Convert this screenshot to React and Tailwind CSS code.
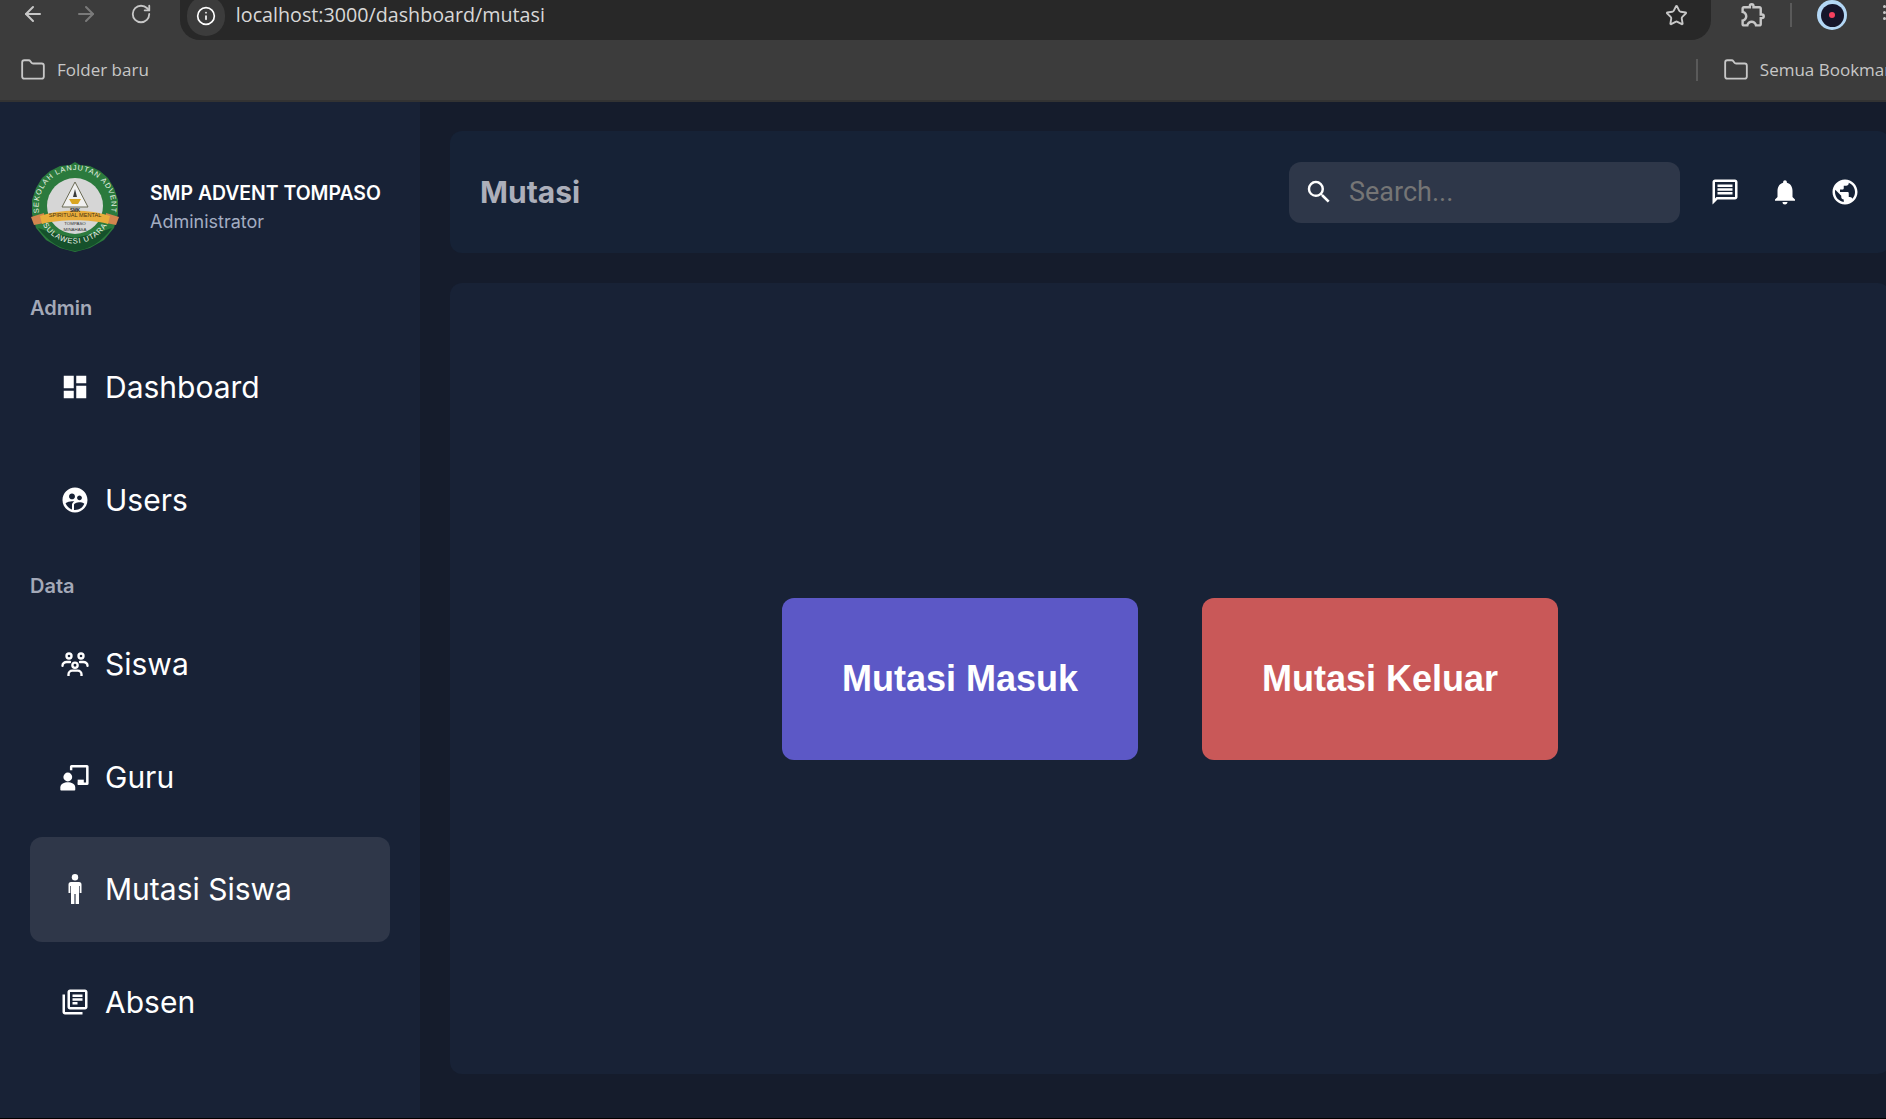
import React from "react";
import { ArrowLeft, ArrowRight, RotateCw, Info, Star, Folder } from "lucide-react";
import {
  MdDashboard, MdSupervisedUserCircle, MdOutlineExtension,
  MdOutlineLibraryBooks, MdSearch, MdOutlineMessage, MdNotifications, MdPublic,
} from "react-icons/md";

function SiswaIcon({ size }) {
  return (
    <svg width={size} height={size} viewBox="0 0 24 24" fill="none" stroke="currentColor" strokeWidth="1.9" strokeLinecap="round">
      <circle cx="7.2" cy="5.6" r="2" />
      <circle cx="16.8" cy="5.6" r="2" />
      <circle cx="12" cy="13" r="2.1" />
      <path d="M6.8 21.5v-1.2a3 3 0 0 1 3-3h4.4a3 3 0 0 1 3 3v1.2" strokeLinecap="butt" />
      <path d="M2 13.4c0-1.8 1.6-3 3.4-3H8" />
      <path d="M22 13.4c0-1.8-1.6-3-3.4-3H16" />
    </svg>
  );
}

function GuruIcon() {
  return (
    <svg width="32" height="32" viewBox="0 0 24 24" fill="currentColor" className="shrink-0">
      <path d="M8.2 7V4.2A1.2 1.2 0 0 1 9.4 3H21a1.2 1.2 0 0 1 1.2 1.2v12.6A1.2 1.2 0 0 1 21 18h-7v-1.9h6.3V4.9H10v2.1z" />
      <rect x="14" y="14" width="4.6" height="3" />
      <circle cx="6.6" cy="12" r="3.3" />
      <path d="M1 21.5v-1.7C1 17.300 4 16 6.600 16s5.600 1.300 5.600 3.800v1.700a.6.6 0 0 1-.6.6H1.600a.6.6 0 0 1-.6-.6z" />
    </svg>
  );
}

function ManIcon() {
  return (
    <svg width="14" height="30" viewBox="0 0 14 30" fill="currentColor" className="shrink-0">
      <circle cx="7" cy="3.300" r="3.200" />
      <path d="M3 8h8a2.500 2.500 0 0 1 2.500 2.500V19h-1.800v-7h-.7v18H7.600V20H6.400v10H3V12h-.7v7H.5v-8.500A2.500 2.500 0 0 1 3 8z" />
    </svg>
  );
}

function Logo() {
  return (
    <svg width="90" height="90" viewBox="0 0 90 90" className="shrink-0">
      <defs>
        <path id="arcTop" d="M9.500 53 A36.500 36.500 0 1 1 80.500 53" fill="none" />
        <path id="arcBottom" d="M13 63 A37 37 0 0 0 77 63" fill="none" />
      </defs>
      <path d="M45 0 L50 3 L60 4 L70 9 L78 16 L84 26 L88 38 L88 52 L84 66 L74 78 L60 86 L45 90 L30 86 L16 78 L6 66 L2 52 L2 38 L6 26 L12 16 L20 9 L30 4 L40 3 Z" fill="#2b7a3d" />
      <path d="M8 66 C18 80 32 88 45 89 C58 88 72 80 82 66 L70 70 L45 76 L20 70 Z" fill="#15512b" />
      <circle cx="45" cy="44" r="28" fill="#d6d6d6" />
      <path d="M45 20 L58 45 L32 45 Z" fill="#f0f0f0" stroke="#6b6b55" strokeWidth="1" />
      <path d="M39 37 H51 L48 42 H42 Z" fill="#d9a521" />
      <path d="M45 27 L47 35 H43 Z" fill="#3a3a3a" />
      <path d="M1 55 L14 51 L14 61 L4 63 Z" fill="#d2854e" />
      <path d="M89 55 L76 51 L76 61 L86 63 Z" fill="#d2854e" />
      <path d="M10 54 C30 47 60 47 80 54 L78 62 C60 57 30 57 12 62 Z" fill="#e9ad3b" />
      <text fontFamily="Liberation Sans, sans-serif" fontSize="7.400" fill="#e9f3e6" letterSpacing="0.900">
        <textPath href="#arcTop" startOffset="50%" textAnchor="middle">SEKOLAH LANJUTAN ADVENT</textPath>
      </text>
      <text fontFamily="Liberation Sans, sans-serif" fontSize="7.600" fill="#eef5ea" letterSpacing="0.800">
        <textPath href="#arcBottom" startOffset="50%" textAnchor="middle">SULAWESI UTARA</textPath>
      </text>
      <text x="45" y="55" textAnchor="middle" fontFamily="Liberation Sans, sans-serif" fontSize="5.600" fill="#4a3410">SPIRITUAL MENTAL</text>
      <text x="45" y="63" textAnchor="middle" fontFamily="Liberation Sans, sans-serif" fontSize="4.400" fill="#333">TOMPASO</text>
      <text x="45" y="69" textAnchor="middle" fontFamily="Liberation Sans, sans-serif" fontSize="4.400" fill="#333">MINAHASA</text>
      <text x="45" y="50" textAnchor="middle" fontFamily="Liberation Sans, sans-serif" fontSize="4.600" fontWeight="700" fill="#222">SMK</text>
    </svg>
  );
}

function NavItem({ icon: Icon, label, active, size = 30 }) {
  return (
    <div className={`flex h-[104.5px] items-center gap-[15px] rounded-xl pl-[30px] mb-2 ${active ? "bg-[#2f3749]" : ""}`}>
      <span className="flex w-[30px] justify-center text-white">
        <Icon size={size} />
      </span>
      <span className="text-[30px] leading-none text-white">{label}</span>
    </div>
  );
}

function SectionLabel({ children, className }) {
  return (
    <div className={`flex items-center text-[20px] font-semibold text-[#a3a9b8] ${className}`}>{children}</div>
  );
}

export default function App() {
  return (
    <div className="flex h-[1119px] w-[1886px] flex-col overflow-hidden bg-[#151c2c] font-['Inter',sans-serif]">
      {/* browser chrome */}
      <div className="h-[102px] shrink-0 border-b-2 border-[#333333] bg-[#3c3c3c] font-['Open_Sans',sans-serif] text-[#c7c7c7]">
        <div className="flex h-[40px] items-start">
          <div className="flex w-[180px] items-center pt-[2px] pl-[21px]">
            <ArrowLeft size={24} strokeWidth={2} className="text-[#c7c7c7]" />
            <ArrowRight size={24} strokeWidth={2} className="ml-[29px] text-[#7a7a7a]" />
            <RotateCw size={22} strokeWidth={2} className="ml-[32px] text-[#c7c7c7]" />
          </div>
          <div className="flex h-[40px] w-[1533px] items-center rounded-b-[20px] bg-[#282828] pl-[7px]">
            <span className="-mt-[8px] flex h-[40px] w-[38px] items-center justify-center rounded-full bg-[#3c3c3c]">
              <Info size={20} className="text-white" />
            </span>
            <span className="-mt-[11px] ml-[11px] text-[19.7px] leading-none text-[#d8d8d8]">localhost:3000/dashboard/mutasi</span>
            <Star size={23} strokeWidth={2} className="-mt-[10px] ml-auto mr-[23px] text-[#c7c7c7]" />
          </div>
          <MdOutlineExtension size={29} className="mt-0 ml-[28px] text-[#c7c7c7]" />
          <div className="mt-[3px] ml-[22px] h-[24px] w-[2px] bg-[#5a5a5a]" />
          <div className="mt-0 ml-[25px] flex h-[30px] w-[30px] items-center justify-center rounded-full bg-[#b3d7f5]">
            <div className="flex h-[23px] w-[23px] items-center justify-center rounded-full bg-[#15152a]">
              <div className="h-[6px] w-[6px] rounded-full bg-[#f5405f]" />
            </div>
          </div>
          <div className="mt-[5px] ml-[36px] flex flex-col gap-[3px]">
            <div className="h-[3px] w-[3px] rounded-full bg-[#c7c7c7]" />
            <div className="h-[3px] w-[3px] rounded-full bg-[#c7c7c7]" />
            <div className="h-[3px] w-[3px] rounded-full bg-[#c7c7c7]" />
          </div>
        </div>
        <div className="flex h-[59px] items-center pl-[20px] whitespace-nowrap">
          <Folder size={26} strokeWidth={1.7} className="shrink-0" />
          <span className="ml-[11px] text-[17px]">Folder baru</span>
          <div className="ml-[1547px] h-[22px] w-[2px] shrink-0 bg-[#5a5a5a]" />
          <Folder size={26} strokeWidth={1.7} className="ml-[25px] shrink-0" />
          <span className="ml-[11px] text-[17px]">Semua Bookmark</span>
        </div>
      </div>

      {/* page */}
      <div className="flex min-h-0 flex-1 border-b border-black">
        <aside className="w-[420px] shrink-0 bg-[#182236] px-[30px] pt-[60px]">
          <div className="flex h-[90px] items-center gap-[30px]">
            <Logo />
            <div className="pt-[1px]">
              <div className="text-[19.4px] leading-[28px] font-semibold whitespace-nowrap text-white">SMP ADVENT TOMPASO</div>
              <div className="text-[18px] leading-[29px] text-[#a3adc2]">Administrator</div>
            </div>
          </div>
          <div className="mt-[30px]">
            <SectionLabel className="-mt-[1px] h-[54px]">Admin</SectionLabel>
            <NavItem icon={MdDashboard} label="Dashboard" />
            <NavItem icon={MdSupervisedUserCircle} label="Users" />
            <SectionLabel className="h-[52px]">Data</SectionLabel>
            <NavItem icon={SiswaIcon} label="Siswa" />
            <NavItem icon={GuruIcon} label="Guru" />
            <NavItem icon={ManIcon} label="Mutasi Siswa" active />
            <NavItem icon={MdOutlineLibraryBooks} label="Absen" />
          </div>
        </aside>
        <main className="ml-[30px] flex w-[1440px] shrink-0 flex-col pt-[29px] pb-[44px]">
          <header className="flex h-[122px] shrink-0 items-center rounded-xl bg-[#162236] px-[30px]">
            <h1 className="text-[30px] font-bold text-[#acafba]">Mutasi</h1>
            <div className="ml-auto flex h-[61px] w-[391px] items-center rounded-xl bg-[#2e3749] pl-[15px]">
              <MdSearch size={30} className="text-white" />
              <span className="ml-[15px] font-['Roboto',sans-serif] text-[27px] text-[#757575]">Search...</span>
            </div>
            <div className="ml-[30px] flex gap-[30px] text-white">
              <MdOutlineMessage size={30} />
              <MdNotifications size={30} />
              <MdPublic size={30} />
            </div>
          </header>
          <section className="mt-[30px] flex flex-1 items-center justify-center gap-[64px] rounded-xl bg-[#182236] font-['Liberation_Sans',sans-serif]">
            <div className="flex h-[162px] w-[356px] items-center justify-center rounded-xl bg-[#5c58c6] text-[36px] font-bold text-white">Mutasi Masuk</div>
            <div className="flex h-[162px] w-[356px] items-center justify-center rounded-xl bg-[#c95858] text-[36px] font-bold text-white">Mutasi Keluar</div>
          </section>
        </main>
      </div>
    </div>
  );
}
